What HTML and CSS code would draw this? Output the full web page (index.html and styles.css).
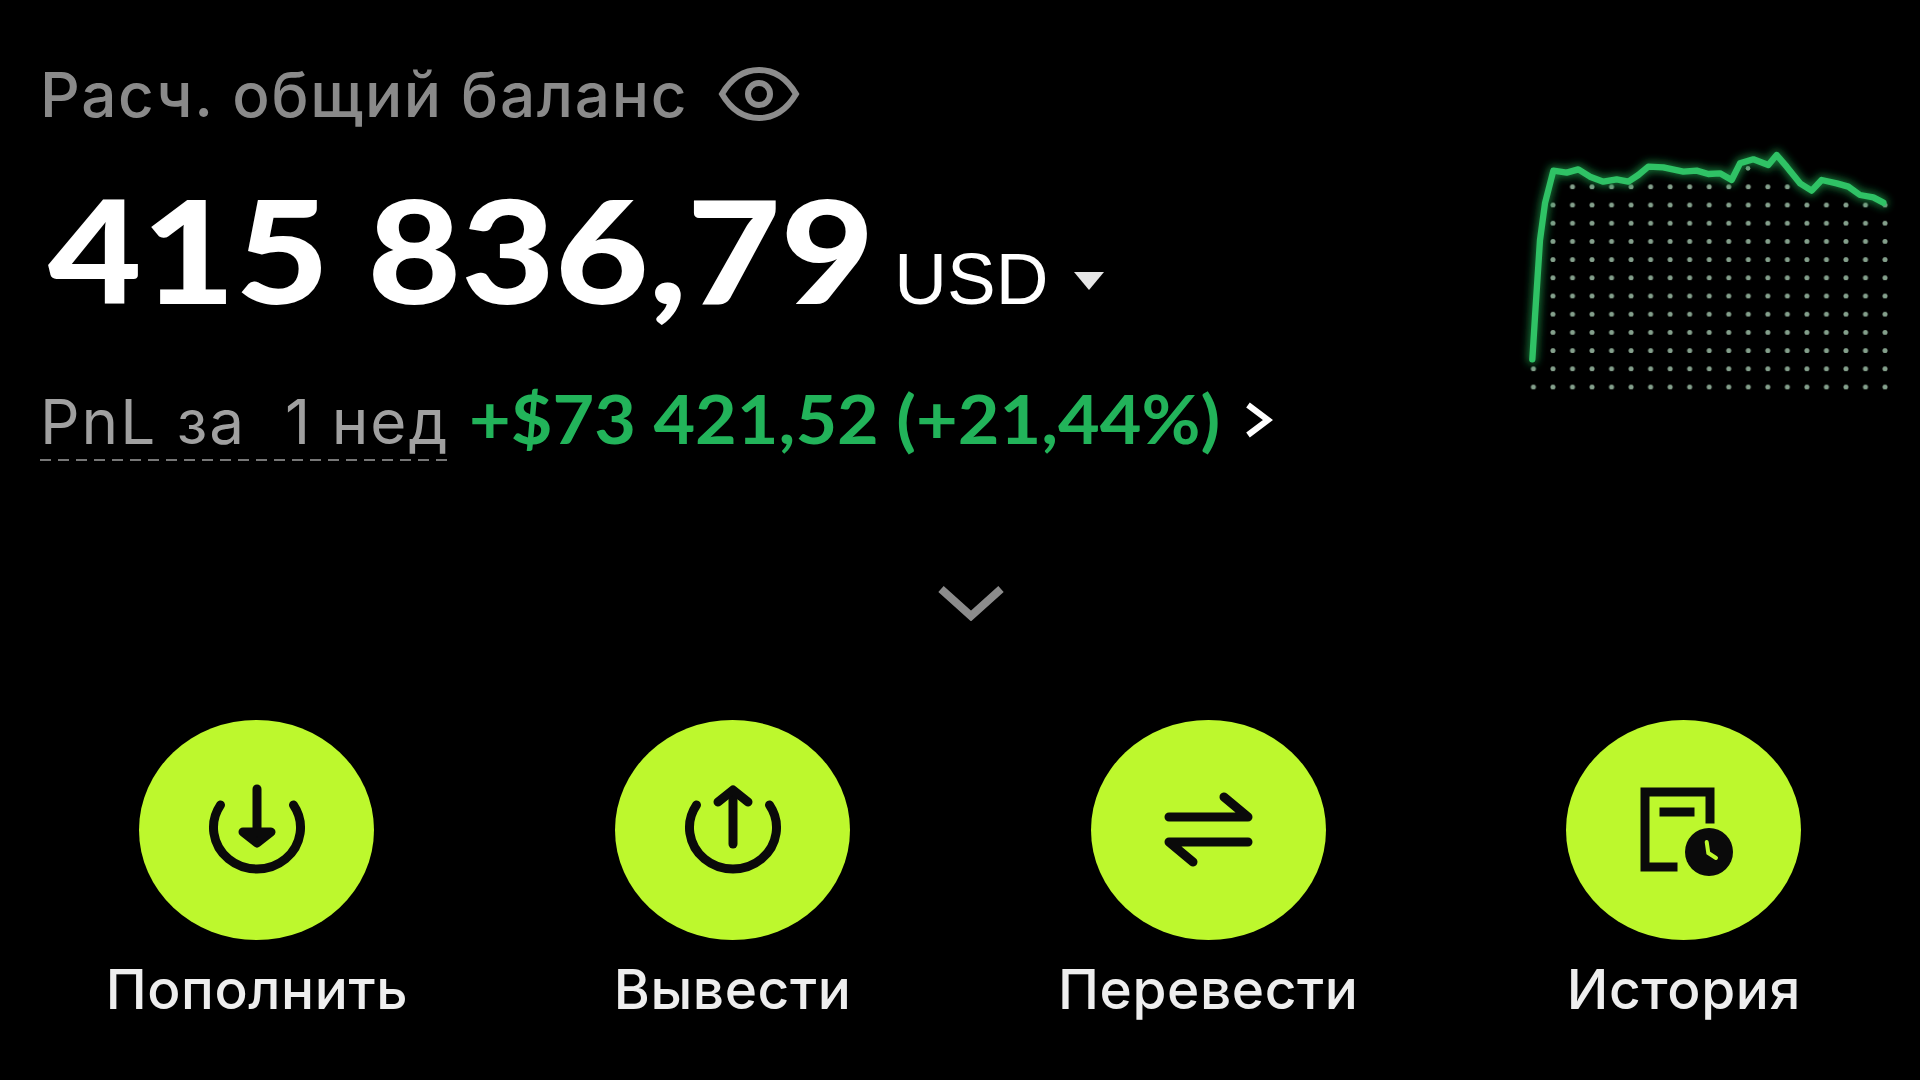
FILE: index.html

```html
<!DOCTYPE html>
<html lang="ru">
<head>
    <meta charset="UTF-8">
    <meta name="viewport" content="width=device-width, initial-scale=1.0">
    <title>Баланс</title>
    <link rel="stylesheet" href="styles.css">
</head>
<body>
<div class="page">
    <div class="top">
        <div class="summary">
            <div class="label-row">
                <span class="label">Расч. общий баланс</span>
                <svg class="eye" viewBox="0 0 82 58" fill="none" stroke="#8c8c8c" stroke-width="6">
                    <path d="M4 29C14 12 26 5 41 5s27 7 37 24C68 46 56 53 41 53S14 46 4 29Z"/>
                    <circle cx="41" cy="29" r="11"/>
                </svg>
            </div>
            <div class="balance-row">
                <span class="balance">415 836,79</span>
                <span class="currency">USD</span>
                <span class="caret"></span>
            </div>
            <div class="pnl-row">
                <span class="pnl-label">PnL за&nbsp; 1 нед</span>
                <span class="pnl-value">+$73 421,52 (+21,44%)</span>
                <svg class="pnl-arrow" viewBox="0 0 30 36" fill="none" stroke="#fff" stroke-width="6">
                    <path d="M5 3L25 18 5 33"/>
                </svg>
            </div>
        </div>

        <svg class="chart" viewBox="0 0 1260 840">
            <defs>
                <pattern id="dots" x="71" y="143" width="58.6" height="54.6" patternUnits="userSpaceOnUse">
                    <circle cx="29.3" cy="27.3" r="7.5" fill="#84a08c"/>
                </pattern>
                <filter id="glow" x="-10%" y="-10%" width="120%" height="120%">
                    <feGaussianBlur stdDeviation="12"/>
                </filter>
            </defs>
            <rect x="188" y="143" width="703" height="54" fill="url(#dots)"/>
            <rect x="130" y="198" width="1055" height="491" fill="url(#dots)"/>
            <rect x="71" y="690" width="1114" height="110" fill="url(#dots)"/>
            <circle cx="744" cy="115" r="7" fill="#84a08c"/>
            <g fill="none" stroke-linejoin="round" stroke-linecap="round">
                <path class="line-glow" filter="url(#glow)" d="M97 688L105 560 120 330 135 220 160 122 200 128 235 118 270 140 310 155 350 148 385 155 415 135 445 110 490 112 550 125 590 122 625 132 660 130 695 150 720 100 760 88 805 105 830 75 860 110 900 160 935 182 965 150 1010 160 1045 170 1080 195 1120 202 1150 218"/>
                <path class="line" d="M97 688L105 560 120 330 135 220 160 122 200 128 235 118 270 140 310 155 350 148 385 155 415 135 445 110 490 112 550 125 590 122 625 132 660 130 695 150 720 100 760 88 805 105 830 75 860 110 900 160 935 182 965 150 1010 160 1045 170 1080 195 1120 202 1150 218"/>
            </g>
        </svg>
    </div>

    <div class="expand">
        <svg viewBox="0 0 66 36" fill="none" stroke="#8c8c8c" stroke-width="8">
            <path d="M3 4l30 27L63 4"/>
        </svg>
    </div>

    <div class="actions">
        <div class="action">
            <div class="action-btn">
                <svg class="action-icon" viewBox="0 0 120 120" fill="none" stroke="#0a0a0a" stroke-width="9" stroke-linecap="round" stroke-linejoin="round">
                    <path d="M23.5 35A43.5 41.5 0 1 0 96.5 35"/>
                    <path d="M60 19V68"/>
                    <path d="M46 62L60 73 74 62Z" fill="#0a0a0a"/>
                </svg>
            </div>
            <span class="action-label">Пополнить</span>
        </div>
        <div class="action">
            <div class="action-btn">
                <svg class="action-icon" viewBox="0 0 120 120" fill="none" stroke="#0a0a0a" stroke-width="9" stroke-linecap="round" stroke-linejoin="round">
                    <path d="M23.5 35A43.5 41.5 0 1 0 96.5 35"/>
                    <path d="M60 22V74"/>
                    <path d="M45 32L60 20 75 32"/>
                </svg>
            </div>
            <span class="action-label">Вывести</span>
        </div>
        <div class="action">
            <div class="action-btn">
                <svg class="action-icon" viewBox="0 0 120 120" fill="none" stroke="#0a0a0a" stroke-width="9" stroke-linecap="round" stroke-linejoin="round">
                    <path d="M21 47H100L76 27"/>
                    <path d="M100 72H21L45 92"/>
                </svg>
            </div>
            <span class="action-label">Перевести</span>
        </div>
        <div class="action">
            <div class="action-btn">
                <svg class="action-icon" viewBox="0 0 120 120" fill="none" stroke="#0a0a0a" stroke-width="9" stroke-linecap="square">
                    <path d="M49 97H21V22H86V49"/>
                    <path d="M40 42H66"/>
                    <circle cx="85" cy="82" r="24" fill="#0a0a0a" stroke="none"/>
                    <path class="clock-hand" d="M82.7 72L84.3 83 92 88"/>
                </svg>
            </div>
            <span class="action-label">История</span>
        </div>
    </div>
</div>
</body>
</html>
```

FILE: styles.css

```css
body {
    margin: 0;
    background-color: #000;
    color: #fff;
    font-family: Inter, "Liberation Sans", sans-serif;
}

.page {
    width: 1920px;
    height: 1080px;
    overflow: hidden;
    filter: blur(0.7px);
}

.top {
    display: flex;
    justify-content: space-between;
    height: 530px;
}

.summary {
    padding: 60px 0 0 40px;
}

.label-row {
    display: flex;
    align-items: center;
    gap: 30px;
    height: 68px;
}

.label {
    font-size: 62px;
    font-weight: 500;
    letter-spacing: 1.7px;
    color: #8a8a8a;
}

.eye {
    width: 82px;
    height: 58px;
}

.balance-row {
    display: flex;
    align-items: baseline;
    margin-top: 46px;
    height: 150px;
}

/* the reference digits are wider than Lato, so stretch them */
.balance {
    font-family: Lato, "Liberation Sans", sans-serif;
    font-weight: 900;
    font-size: 143px;
    line-height: 150px;
    margin-left: 8px;
    margin-right: 88px;
    transform: scaleX(1.13);
    transform-origin: left;
}

.currency {
    font-family: "Liberation Sans", sans-serif;
    font-size: 73px;
    margin-left: 27px;
}

.caret {
    width: 0;
    height: 0;
    margin-left: 26px;
    border-left: 15px solid transparent;
    border-right: 15px solid transparent;
    border-top: 18px solid #e6e6e6;
    transform: translateY(-14px);
}

.pnl-row {
    display: flex;
    align-items: baseline;
    margin-top: 55px;
    height: 80px;
}

.pnl-label {
    font-size: 62px;
    letter-spacing: 2px;
    color: #a0a0a0;
    padding-bottom: 2px;
    background: repeating-linear-gradient(90deg, #777 0 11px, transparent 11px 18px) bottom / 100% 2px no-repeat;
}

.pnl-value {
    font-family: Lato, "Liberation Sans", sans-serif;
    font-size: 66px;
    font-weight: 700;
    color: #22b35a;
    margin-left: 20px;
    margin-right: 60px;
    transform: scaleX(1.09);
    transform-origin: left;
}

.pnl-arrow {
    align-self: flex-start;
    width: 30px;
    height: 36px;
    margin-top: 23px;
    margin-left: 24px;
}

.chart {
    width: 420px;
    height: 280px;
    margin-top: 130px;
}

.line {
    stroke: #2fc265;
    stroke-width: 19;
}

.line-glow {
    stroke: #1f9c4c;
    stroke-width: 28;
    opacity: 0.8;
}

.expand {
    display: flex;
    justify-content: center;
    height: 190px;
    padding: 55px 0 0 22px;
    box-sizing: border-box;
}

.expand svg {
    width: 66px;
    height: 36px;
}

.actions {
    display: grid;
    grid-template-columns: repeat(4, 475.7px);
    padding-left: 19px;
}

.action {
    display: flex;
    flex-direction: column;
    align-items: center;
}

.action-btn {
    display: flex;
    align-items: center;
    justify-content: center;
    width: 235px;
    height: 220px;
    border-radius: 50%;
    background-color: #bdf82d;
}

.action-icon {
    width: 120px;
    height: 120px;
}

.clock-hand {
    stroke: #bdf82d;
    stroke-width: 4;
    stroke-linecap: round;
}

.action-label {
    margin-top: 16px;
    font-size: 55px;
    font-weight: 500;
    letter-spacing: 0.6px;
    color: #eee;
}
```
